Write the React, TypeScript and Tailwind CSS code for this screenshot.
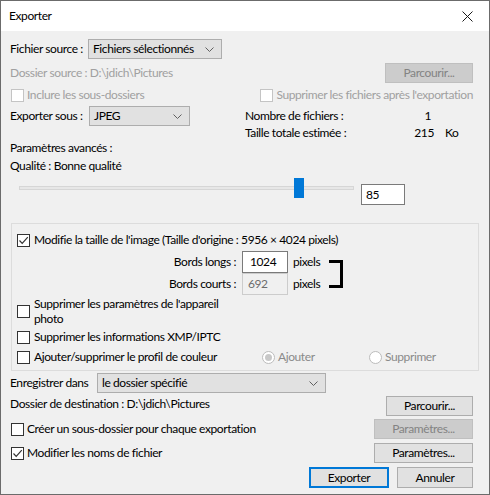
import React from "react";

const Chevron = () => (
  <svg width="9" height="5" viewBox="0 0 9 5" className="shrink-0">
    <polyline points="0.5,0.5 4.5,4.5 8.5,0.5" fill="none" stroke="#606060" strokeWidth="1" />
  </svg>
);

function Select({ w, text }: { w: string; text: string }) {
  return (
    <div className={`${w} h-[20px] shrink-0 bg-[#e1e1e1] border border-[#adadad] flex items-center justify-between pl-[4px] pr-[7px]`}>
      <span>{text}</span>
      <Chevron />
    </div>
  );
}

function Button({ w, text, disabled, def }: { w: string; text: string; disabled?: boolean; def?: boolean }) {
  const cls = disabled
    ? "bg-[#cccccc] border border-[#bfbfbf] text-[#838383]"
    : def
    ? "bg-[#e1e1e1] border-2 border-[#0078d7]"
    : "bg-[#e1e1e1] border border-[#adadad]";
  return <div className={`${w} h-full shrink-0 flex items-center justify-center ${cls}`}>{text}</div>;
}

function Check({ checked, disabled }: { checked?: boolean; disabled?: boolean }) {
  return (
    <div
      className={`w-[13px] h-[13px] shrink-0 bg-white border ${disabled ? "border-[#c4c4c4]" : "border-[#333333]"} flex items-center justify-center`}
    >
      {checked && (
        <svg width="11" height="11" viewBox="0 0 11 11">
          <polyline points="1.5,5.5 4.2,8.3 9.8,2.2" fill="none" stroke="#333333" strokeWidth="1.2" />
        </svg>
      )}
    </div>
  );
}

function Radio({ checked }: { checked?: boolean }) {
  return (
    <div className="w-[13px] h-[13px] shrink-0 rounded-full bg-white border border-[#bcbcbc] flex items-center justify-center">
      {checked && <div className="w-[7px] h-[7px] rounded-full bg-[#c8c8c8]" />}
    </div>
  );
}

export default function App() {
  return (
    <div className="w-[490px] h-[495px] border border-[#6b6b6b] bg-[#f0f0f0] flex flex-col text-[12px] leading-[16px] tracking-[-0.4px] whitespace-nowrap text-black font-['Lato',sans-serif] overflow-hidden">
      {/* Title bar */}
      <div className="h-[30px] shrink-0 bg-white flex items-center justify-between pl-[8px] pr-[16px]">
        <span>Exporter</span>
        <svg width="11" height="11" viewBox="0 0 11 11">
          <line x1="0.5" y1="0.5" x2="10.5" y2="10.5" stroke="#1a1a1a" strokeWidth="1" />
          <line x1="10.5" y1="0.5" x2="0.5" y2="10.5" stroke="#1a1a1a" strokeWidth="1" />
        </svg>
      </div>

      <div className="flex flex-col pl-[9px] pr-[16px]">
        {/* Fichier source */}
        <div className="mt-[8px] h-[20px] flex items-center">
          <span className="w-[78px] shrink-0">Fichier source :</span>
          <Select w="w-[134px]" text="Fichiers sélectionnés" />
        </div>

        {/* Dossier source */}
        <div className="mt-[4px] h-[20px] flex items-center justify-between">
          <span className="text-[#a0a0a0]">Dossier source : D:\jdich\Pictures</span>
          <Button w="w-[88px]" text="Parcourir..." disabled />
        </div>

        {/* Checkboxes */}
        <div className="mt-[2px] h-[20px] flex items-center">
          <div className="flex items-center gap-[3px] ml-[1px] text-[#a0a0a0]">
            <Check disabled />
            <span>Inclure les sous-dossiers</span>
          </div>
          <div className="flex items-center gap-[3px] ml-auto text-[#a0a0a0]">
            <Check disabled />
            <span>Supprimer les fichiers après l'exportation</span>
          </div>
        </div>

        {/* Exporter sous */}
        <div className="mt-[1px] h-[20px] flex items-center">
          <div className="w-[235px] shrink-0 flex items-center">
            <span className="w-[79px] shrink-0">Exporter sous :</span>
            <Select w="w-[101px]" text="JPEG" />
          </div>
          <span className="w-[150px] shrink-0">Nombre de fichiers :</span>
          <span className="w-[39px] text-right pr-[3px]">1</span>
        </div>
        <div className="h-[14px] flex items-center">
          <span className="ml-[235px] w-[150px] shrink-0">Taille totale estimée :</span>
          <span className="w-[39px] text-right">215</span>
          <span className="ml-[11px]">Ko</span>
        </div>

        <div className="h-[16px] flex items-center">Paramètres avancés :</div>
        <div className="mt-[2px] h-[16px] flex items-center">Qualité : Bonne qualité</div>

        {/* Slider */}
        <div className="mt-[4px] h-[27px] flex">
          <div className="relative ml-[9px] w-[335px] h-full shrink-0">
            <div className="absolute left-0 right-0 top-[8px] h-[4px] bg-[#e7e7e7] border border-[#d6d6d6]" />
            <div className="absolute left-[275px] top-0 w-[10px] h-[20px] bg-[#0078d7]" />
          </div>
          <div className="ml-[7px] self-end w-[44px] h-[21px] bg-white border border-[#7a7a7a] flex items-center pl-[4px]">
            85
          </div>
        </div>

        {/* Group box */}
        <div className="mt-[18px] ml-[1px] w-[468px] h-[148px] shrink-0 border border-[#dcdcdc] flex flex-col">
          <div className="mt-[8px] h-[16px] flex items-center gap-[4px] pl-[5px]">
            <Check checked />
            <span>Modifie la taille de l'image (Taille d'origine : 5956 × 4024 pixels)</span>
          </div>

          <div className="mt-[3px] flex">
            <div className="w-[311px] shrink-0 flex flex-col">
              <div className="h-[22px] flex items-center">
                <span className="w-[224px] shrink-0 text-right">Bords longs :</span>
                <div className="ml-[6px] w-[46px] h-[22px] shrink-0 bg-white border border-[#7a7a7a] flex items-center pl-[7px]">
                  1024
                </div>
                <span className="ml-[5px]">pixels</span>
              </div>
              <div className="h-[22px] flex items-center">
                <span className="w-[224px] shrink-0 text-right">Bords courts :</span>
                <div className="ml-[6px] w-[46px] h-[22px] shrink-0 bg-[#f0f0f0] border border-[#cccccc] text-[#6d6d6d] flex items-center pl-[5px]">
                  692
                </div>
                <span className="ml-[5px]">pixels</span>
              </div>
            </div>
            <svg width="15" height="28" viewBox="0 0 15 28" className="mt-[9px] ml-[6px] shrink-0">
              <polyline points="0,1.5 12.5,1.5 12.5,26.5 0,26.5" fill="none" stroke="#000" strokeWidth="3" />
            </svg>
          </div>

          <div className="mt-[1px] flex items-center gap-[4px] pl-[5px] leading-[15px]">
            <Check />
            <span>
              Supprimer les paramètres de l'appareil
              <br />
              photo
            </span>
          </div>

          <div className="mt-[3px] h-[16px] flex items-center gap-[4px] pl-[5px]">
            <Check />
            <span>Supprimer les informations XMP/IPTC</span>
          </div>

          <div className="mt-[4px] h-[16px] flex items-center pl-[5px]">
            <div className="w-[245px] shrink-0 flex items-center gap-[4px]">
              <Check />
              <span>Ajouter/supprimer le profil de couleur</span>
            </div>
            <div className="w-[107px] shrink-0 flex items-center gap-[3px] text-[#8a8a8a]">
              <Radio checked />
              <span>Ajouter</span>
            </div>
            <div className="flex items-center gap-[3px] text-[#8a8a8a]">
              <Radio />
              <span>Supprimer</span>
            </div>
          </div>
        </div>

        {/* Enregistrer dans */}
        <div className="mt-[2px] h-[20px] flex items-center">
          <span className="w-[87px] shrink-0">Enregistrer dans</span>
          <Select w="w-[229px]" text="le dossier spécifié" />
        </div>

        <div className="mt-[3px] h-[20px] flex justify-between">
          <span className="self-start">Dossier de destination : D:\jdich\Pictures</span>
          <Button w="w-[87px]" text="Parcourir..." />
        </div>

        <div className="mt-[3px] h-[20px] flex items-center">
          <div className="flex items-center gap-[3px] ml-[1px]">
            <Check />
            <span>Créer un sous-dossier pour chaque exportation</span>
          </div>
          <div className="ml-auto h-full flex">
            <Button w="w-[99px]" text="Paramètres..." disabled />
          </div>
        </div>

        <div className="mt-[4px] h-[20px] flex items-center">
          <div className="flex items-center gap-[3px] ml-[1px]">
            <Check checked />
            <span>Modifier les noms de fichier</span>
          </div>
          <div className="ml-auto h-full flex">
            <Button w="w-[99px]" text="Paramètres..." />
          </div>
        </div>

        <div className="mt-[4px] h-[21px] flex justify-end gap-[8px]">
          <Button w="w-[80px]" text="Exporter" def />
          <Button w="w-[76px]" text="Annuler" />
        </div>
      </div>
    </div>
  );
}
